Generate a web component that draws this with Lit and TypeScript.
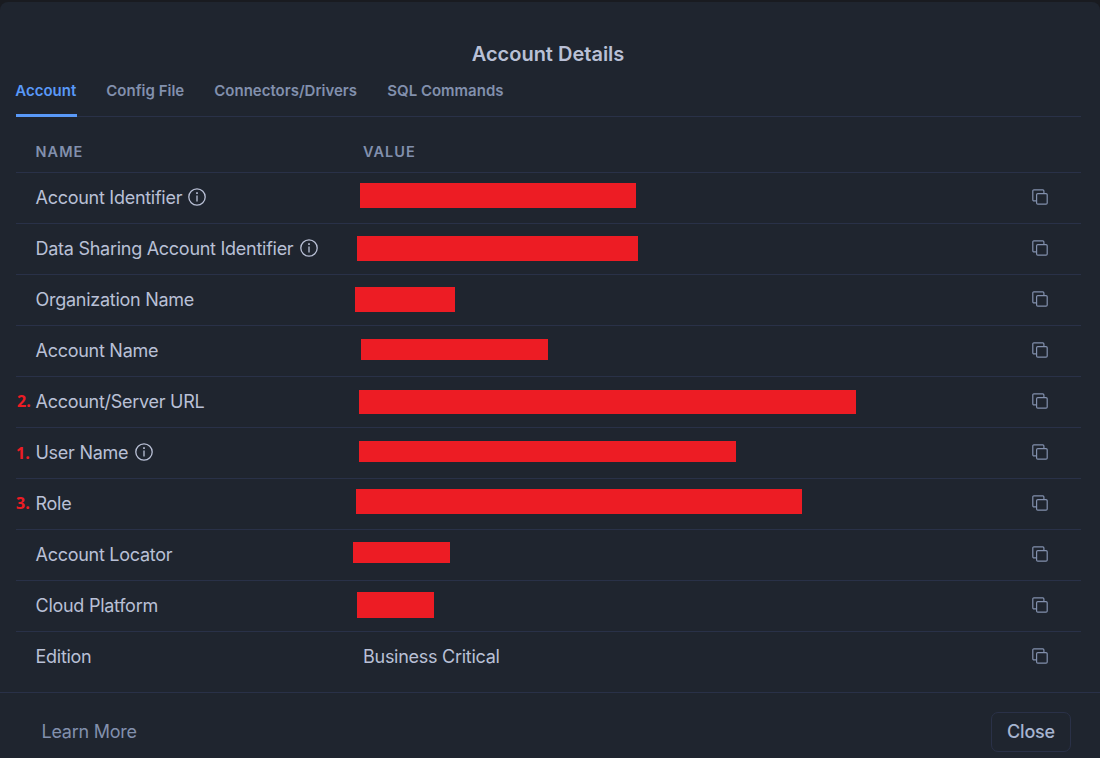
import { LitElement, html, css, svg, nothing } from "lit";
import { customElement, state } from "lit/decorators.js";

interface Bar { x: number; y: number; w: number; h: number }
interface Row { name: string; info?: boolean; mark?: string; markX?: number; markY?: number; bar?: Bar; value?: string }

const TABS = [
  { label: "Account", width: 61 },
  { label: "Config File", width: 78 },
  { label: "Connectors/Drivers", width: 143 },
  { label: "SQL Commands", width: 117 },
];

// Bar x and y are insets inside the value cell.
const ROWS: Row[] = [
  { name: "Account Identifier", info: true, bar: { x: 7, y: 10, w: 276, h: 25 } },
  { name: "Data Sharing Account Identifier", info: true, bar: { x: 4, y: 12, w: 281, h: 25 } },
  { name: "Organization Name", bar: { x: 2, y: 12, w: 100, h: 25 } },
  { name: "Account Name", bar: { x: 8, y: 13, w: 187, h: 21 } },
  { name: "Account/Server URL", mark: "2.", markX: 1, bar: { x: 6, y: 13, w: 497, h: 24 } },
  { name: "User Name", info: true, mark: "1.", markX: 0, markY: 1, bar: { x: 6, y: 13, w: 377, h: 21 } },
  { name: "Role", mark: "3.", markX: 0, bar: { x: 3, y: 10, w: 446, h: 25 } },
  { name: "Account Locator", bar: { x: 0, y: 12, w: 97, h: 21 } },
  { name: "Cloud Platform", bar: { x: 4, y: 11, w: 77, h: 26 } },
  { name: "Edition", value: "Business Critical" },
];

const infoIcon = html`<svg class="info" width="18" height="18" viewBox="0 0 18 18" fill="none">
  ${svg`<circle cx="9" cy="9" r="8.2" stroke="currentColor" stroke-width="1.3"/><rect x="8.1" y="4.3" width="1.8" height="1.6" fill="currentColor"/><path d="M9 7.5V13.6" stroke="currentColor" stroke-width="1.3"/>`}
</svg>`;

const copyIcon = html`<svg width="16" height="16" viewBox="0 0 16 16" fill="none" stroke="currentColor" stroke-width="1.2">
  ${svg`<rect x="4.6" y="4.6" width="10.6" height="10.6" rx="1.2"/><path d="M4.4 11.9H1.9a1.1 1.1 0 0 1-1.1-1.1V1.9A1.1 1.1 0 0 1 1.9.8h8.9a1.1 1.1 0 0 1 1.1 1.1v2.5"/>`}
</svg>`;

@customElement("app-root")
export class AppRoot extends LitElement {
  @state() private active = 0;

  static styles = css`
    :host {
      display: block;
      height: 758px;
      box-sizing: border-box;
      padding-top: 2px;
      background: #191b20;
      overflow: hidden;
      font-family: Inter, "Liberation Sans", sans-serif;
      color: #b9c0d6;
    }
    * { box-sizing: border-box; }
    .dialog {
      height: 756px;
      display: flex;
      flex-direction: column;
      background: #1f252f;
      border-radius: 8px 8px 0 0;
    }
    .title {
      margin: 0;
      padding: 38px 4px 0 0;
      height: 74px;
      line-height: 28px;
      font-size: 20px;
      font-weight: 600;
      text-align: center;
    }
    .tabs {
      display: flex;
      gap: 30px;
      height: 41px;
      margin: 0 19px 0 16px;
      border-bottom: 1px solid #293148;
    }
    .tab {
      height: 41px;
      padding: 0;
      border: 0;
      border-bottom: 3px solid transparent;
      background: none;
      color: #8290ad;
      font: 600 15px/30px Inter, sans-serif;
      text-align: left;
      white-space: nowrap;
      display: block;
      flex: none;
    }
    .tab span { display: block; height: 38px; margin-left: -0.7px; }
    .tab.active { color: #5999f8; border-bottom-color: #5999f8; }
    .table { margin: 0 19px 0 16px; }
    .row {
      display: grid;
      grid-template-columns: 19.5px 317.5px 1fr 49px;
      grid-template-rows: 50px;
      height: 51px;
      border-bottom: 1px solid #293148;
      line-height: 50px;
      font-size: 18px;
      letter-spacing: -0.27px;
    }
    .row:last-child { border-bottom: 0; }
    .head {
      height: 56px;
      grid-template-rows: 40px;
      padding-top: 15px;
      line-height: 40px;
      font-size: 14.5px;
      font-weight: 600;
      letter-spacing: 1.05px;
      color: #8290ad;
    }
    .value { padding-left: 10px; }
    .mark {
      font: 700 16px/49px "Open Sans", sans-serif;
      letter-spacing: 0;
      color: #ed1c24;
      white-space: nowrap;
    }
    .name { display: flex; gap: 6.3px; white-space: nowrap; }
    .info { flex: none; margin-top: 15px; }
    .bar { background: #ed1c24; }
    .copy { padding-top: 16px; line-height: 0; color: #8290ad; }
    .foot {
      margin-top: auto;
      height: 66px;
      display: flex;
      justify-content: space-between;
      align-items: flex-start;
      border-top: 1px solid #293148;
      padding: 19px 29px 0 41.5px;
      font-size: 18px;
    }
    .learn { line-height: 40px; letter-spacing: -0.25px; color: #8290ad; }
    .close {
      width: 80px;
      height: 40px;
      padding: 0;
      border: 1px solid #2a3148;
      border-radius: 7px;
      background: none;
      color: #a6b4d0;
      font: 500 18px/38px Inter, sans-serif;
      letter-spacing: -0.2px;
    }
  `;

  private row(r: Row) {
    return html`<div class="row">
      <span class="mark" style="padding:${r.markY ?? 0}px 0 0 ${r.markX ?? 0}px">${r.mark ?? nothing}</span>
      <span class="name"><span class="label">${r.name}</span>${r.info ? infoIcon : nothing}</span>
      ${r.bar
        ? html`<div><div class="bar" style="margin:${r.bar.y}px 0 0 ${r.bar.x}px;width:${r.bar.w}px;height:${r.bar.h}px"></div></div>`
        : html`<span class="value">${r.value}</span>`}
      <span class="copy">${copyIcon}</span>
    </div>`;
  }

  render() {
    return html`<div class="dialog">
      <h1 class="title">Account Details</h1>
      <nav class="tabs">
        ${TABS.map((t, i) => html`<button class="tab ${i === this.active ? "active" : ""}" style="width:${t.width}px"
          @click=${() => (this.active = i)}><span>${t.label}</span></button>`)}
      </nav>
      <div class="table">
        <div class="row head"><span></span><span>NAME</span><span class="value">VALUE</span><span></span></div>
        ${ROWS.map((r) => this.row(r))}
      </div>
      <footer class="foot">
        <span class="learn">Learn More</span>
        <button class="close">Close</button>
      </footer>
    </div>`;
  }
}
